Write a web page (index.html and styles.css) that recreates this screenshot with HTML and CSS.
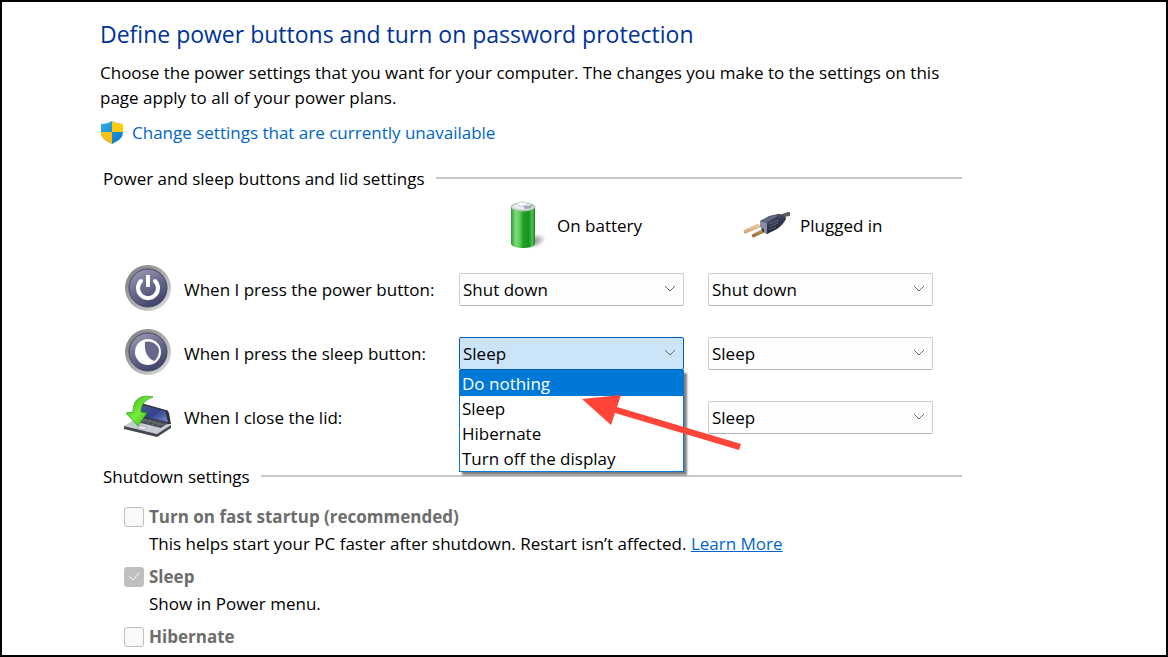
FILE: index.html
```html
<!DOCTYPE html>
<html lang="en">
<head>
	<meta charset="UTF-8">
	<meta name="viewport" content="width=device-width, initial-scale=1">
	<title>System Settings</title>
	<link rel="stylesheet" href="styles.css">
</head>
<body>
	<main class="window">
		<div class="content">
			<h1>Define power buttons and turn on password protection</h1>
			<p class="intro">Choose the power settings that you want for your computer. The changes you make to the settings on this page apply to all of your power plans.</p>
			<a class="admin-link" href="#">
				<svg class="shield" viewBox="0 0 24 24" aria-hidden="true">
					<defs>
						<clipPath id="shield-clip"><path d="M12 0C9 2 5 3 1 3v8c0 6 5 9 11 12 6-3 11-6 11-12V3c-4 0-8-1-11-3z"/></clipPath>
						<linearGradient id="shield-blue" x1="0" y1="0" x2="1" y2="1"><stop offset="0" stop-color="#35ade6"/><stop offset="1" stop-color="#0872c8"/></linearGradient>
						<linearGradient id="shield-gold" x1="1" y1="0" x2="0" y2="1"><stop offset="0" stop-color="#ffd400"/><stop offset="1" stop-color="#f9b616"/></linearGradient>
					</defs>
					<g clip-path="url(#shield-clip)">
						<path fill="url(#shield-blue)" d="M0 0h24v24H0z"/>
						<path fill="url(#shield-gold)" d="M12 0h12v11H12zM0 11h12v13H0z"/>
					</g>
				</svg>
				<span>Change settings that are currently unavailable</span>
			</a>

			<section>
				<h2>Power and sleep buttons and lid settings</h2>
				<div class="settings">
					<div class="source source-battery">
						<svg class="icon" viewBox="0 0 48 48" aria-hidden="true">
							<defs>
								<linearGradient id="cell"><stop offset="0" stop-color="#2f9a35"/><stop offset=".2" stop-color="#7ddd7b"/><stop offset=".38" stop-color="#58c95a"/><stop offset=".5" stop-color="#22a02a"/><stop offset=".75" stop-color="#179420"/><stop offset=".88" stop-color="#4cc352"/><stop offset="1" stop-color="#177d1e"/></linearGradient>
								<radialGradient id="cell-shadow"><stop offset="0" stop-color="#777" stop-opacity=".8"/><stop offset="1" stop-color="#777" stop-opacity="0"/></radialGradient>
							</defs>
							<ellipse cx="36" cy="40" rx="11" ry="7" fill="url(#cell-shadow)" transform="rotate(-20 36 40)"/>
							<path fill="url(#cell)" d="M12 6v37c1 3 7 4 12 4s11-1 12-4V6z"/>
							<ellipse cx="24" cy="6" rx="12" ry="4" fill="#d4e2d6" stroke="#9abf9c"/>
							<ellipse cx="24" cy="5" rx="9" ry="3" fill="#eef0f6"/>
							<path fill="#a5a7bd" d="M24 5l10-1c-1 3-4 4-8 4z"/>
							<ellipse cx="23" cy="3" rx="5" ry="2" fill="#fff" stroke="#c9cad8"/>
						</svg>
						<span>On battery</span>
					</div>
					<div class="source source-plugged">
						<svg class="icon" viewBox="0 0 48 48" aria-hidden="true">
							<defs>
								<linearGradient id="plug" x1="0" y1="0" x2=".5" y2="1"><stop offset="0" stop-color="#5a5e78"/><stop offset=".5" stop-color="#3a3d55"/><stop offset="1" stop-color="#1d1f33"/></linearGradient>
								<linearGradient id="prong" x1=".3" y1="0" x2=".7" y2="1"><stop offset="0" stop-color="#fbe6c4"/><stop offset=".5" stop-color="#d9a468"/><stop offset="1" stop-color="#76502d"/></linearGradient>
							</defs>
							<path fill="none" stroke="#59605e" stroke-width="4" d="M40 16c3-3 5-3 8-3"/>
							<path fill="url(#prong)" stroke="#a98055" stroke-width=".4" d="M16 23L3 29c-2 1-1 4 1 3l14-6zM23 27l-12 6c-2 1-1 4 1 3l13-6z"/>
							<path fill="url(#plug)" d="M18 20l9-5 9-2c4 0 8 2 8 5-2 4-5 7-9 10l-10 5-5-3z"/>
							<path fill="#8a8da6" d="M18 20l7 2v11l-3-1v-4l-4-2z"/>
							<path fill="#777b92" opacity=".5" d="M19 20l9-5 9-1-12 8z"/>
							<path fill="none" stroke="#858aa2" stroke-width=".5" d="M27 23l10-4M27 26l9-4M27 29l7-3M22 20l12-5"/>
						</svg>
						<span>Plugged in</span>
					</div>

					<div class="action">
						<svg class="icon" viewBox="0 0 48 48" aria-hidden="true">
							<defs>
								<linearGradient id="ring" x1="0" y1="0" x2="1" y2="1"><stop offset="0" stop-color="#777"/><stop offset=".5" stop-color="#aaa"/><stop offset="1" stop-color="#e3e3e3"/></linearGradient>
								<linearGradient id="face" x1=".2" y1="0" x2=".7" y2="1"><stop offset="0" stop-color="#9a9bb0"/><stop offset=".5" stop-color="#66678a"/><stop offset="1" stop-color="#40416a"/></linearGradient>
							</defs>
							<circle cx="24" cy="23" r="23" fill="url(#ring)"/>
							<circle cx="24" cy="23" r="19" fill="url(#face)" stroke="#44465e"/>
							<g fill="none" stroke="#fff" stroke-linecap="round" stroke-width="4">
								<path d="M17 16a10 10 0 1 0 14 0"/>
								<path stroke-linecap="butt" d="M24 10v12"/>
							</g>
						</svg>
						<span>When I press the power button:</span>
					</div>
					<div class="choice">
						<select aria-label="When I press the power button, on battery"><option>Shut down</option><option>Sleep</option></select>
					</div>
					<div class="choice">
						<select aria-label="When I press the power button, plugged in"><option>Shut down</option><option>Sleep</option></select>
					</div>

					<div class="action">
						<svg class="icon" viewBox="0 0 48 48" aria-hidden="true">
							<circle cx="24" cy="23" r="23" fill="url(#ring)"/>
							<circle cx="24" cy="23" r="19" fill="url(#face)" stroke="#44465e"/>
							<circle cx="24" cy="23" r="13" fill="#fff"/>
							<path fill="#66678a" d="M21 13c6-2 13 2 14 8 0 5-2 9-5 11-7-3-10-10-9-19z"/>
						</svg>
						<span>When I press the sleep button:</span>
					</div>
					<div class="choice">
						<select class="open" aria-label="When I press the sleep button, on battery"><option>Sleep</option><option>Do nothing</option></select>
						<ul class="menu" role="listbox" aria-label="Sleep button actions">
							<li class="selected" role="option" aria-selected="true">Do nothing</li>
							<li role="option">Sleep</li>
							<li role="option">Hibernate</li>
							<li role="option">Turn off the display</li>
						</ul>
						<svg class="pointer" viewBox="0 0 160 58" aria-hidden="true">
							<path fill="#ff4538" d="M0 6l39-4-4 12 124 37-2 6L33 20l-4 12z"/>
						</svg>
					</div>
					<div class="choice">
						<select aria-label="When I press the sleep button, plugged in"><option>Sleep</option><option>Do nothing</option></select>
					</div>

					<div class="action">
						<svg class="icon" viewBox="0 0 48 48" aria-hidden="true">
							<defs>
								<linearGradient id="screen" x1="0" y1="0" x2="1" y2="1"><stop offset="0" stop-color="#4a5794"/><stop offset=".5" stop-color="#34438a"/><stop offset="1" stop-color="#7489d2"/></linearGradient>
								<linearGradient id="down" x1="0" y1="0" x2="1" y2="1"><stop offset="0" stop-color="#2fb416"/><stop offset=".5" stop-color="#78ea3c"/><stop offset="1" stop-color="#2eb512"/></linearGradient>
							</defs>
							<path fill="#30333e" d="M17 10l25 7c2 0 2 1 3 3l2 11-6 1-27-7z"/>
							<path fill="url(#screen)" d="M18 12l23 6 3 11-27-6z"/>
							<path fill="#c8cbd1" d="M11 26l36 6-14 9L0 33z"/>
							<path fill="#44474f" d="M0 33l33 8 14-9v3L33 44 0 36z"/>
							<path fill="#4b4d57" d="M17 24l27 6-7 5-24-6z"/>
							<path fill="none" stroke="#8b8e98" stroke-width=".5" d="M16 26l24 6M22 26l-4 3M27 27l-4 3M32 29l-4 3M37 30l-4 3"/>
							<path fill="#edeef2" stroke="#888b93" stroke-width=".5" d="M17 33l6 1-3 3-7-2z"/>
							<path fill="url(#down)" stroke="#1c9810" stroke-width=".7" d="M29 4C17 1 9 6 9 19l-7 1 12 13 9-13-6-1c0-7 3-12 12-15z"/>
						</svg>
						<span>When I close the lid:</span>
					</div>
					<div class="choice">
						<select aria-label="When I close the lid, on battery"><option>Sleep</option></select>
					</div>
					<div class="choice">
						<select aria-label="When I close the lid, plugged in"><option>Sleep</option></select>
					</div>
				</div>
			</section>

			<section>
				<h2>Shutdown settings</h2>
				<div class="shutdown">
					<input type="checkbox" id="fast-startup" disabled>
					<label for="fast-startup">Turn on fast startup (recommended)</label>
					<p>This helps start your PC faster after shutdown. Restart isn’t affected. <a href="#">Learn More</a></p>
					<input type="checkbox" id="sleep" checked disabled>
					<label for="sleep">Sleep</label>
					<p>Show in Power menu.</p>
					<input type="checkbox" id="hibernate" disabled>
					<label for="hibernate">Hibernate</label>
				</div>
			</section>
		</div>
	</main>
</body>
</html>
```
FILE: styles.css
```css
* {
	box-sizing: border-box;
}
body {
	margin: 0;
	background: #fff;
	color: #000;
	font: 17px/25px "Open Sans", "Noto Sans", sans-serif;
}
h1, h2, p, ul {
	margin: 0;
	padding: 0;
	font-weight: normal;
}
a {
	color: #0066cc;
}
.window {
	min-height: 100vh;
	border: 2px solid #000;
	padding: 16px 24px 0 98px;
}
.content {
	max-width: 862px;
}
h1 {
	color: #003399;
	font-size: 23px;
	line-height: 32px;
}
.intro {
	margin-top: 10px;
}
.admin-link {
	display: flex;
	align-items: center;
	gap: 8px;
	margin-top: 10px;
	text-decoration: none;
}
.shield {
	width: 24px;
	height: 24px;
}
section {
	margin-left: 3px;
}
h2 {
	display: flex;
	align-items: center;
	gap: 11px;
	font-size: 17px;
}
h2::after {
	content: "";
	flex: 1;
	height: 2px;
	margin-bottom: 2px;
	background: #c8c8c8;
}

/* power and sleep buttons */
.admin-link + section {
	margin-top: 21px;
}
.settings {
	display: grid;
	grid-template-columns: minmax(0, 311px) 225px 225px;
	grid-auto-rows: 64px;
	column-gap: 24px;
	align-items: center;
	margin-top: 2px;
	padding-left: 21px;
}
.source, .action {
	display: flex;
	align-items: center;
}
.source {
	gap: 10px;
}
.action {
	gap: 12px;
}
.source-battery {
	grid-column: 2;
	padding-left: 40px;
}
.source-plugged {
	padding-left: 34px;
}
.icon {
	flex: none;
	width: 48px;
	height: 48px;
}
.choice {
	position: relative;
}
select {
	display: block;
	width: 100%;
	height: 33px;
	padding: 0 3px;
	border: 1px solid #ccc;
	border-bottom-color: #b4b4b4;
	border-radius: 2px;
	appearance: none;
	background: #fdfdfd url("data:image/svg+xml,%3Csvg xmlns='http://www.w3.org/2000/svg' width='12' height='8'%3E%3Cpath fill='none' stroke='%23666' d='M1 1l5 5 5-5'/%3E%3C/svg%3E") no-repeat right 7px center;
	color: #000;
	font: inherit;
}
select.open {
	border-color: #005fb8;
	background-color: #cce4f7;
}
.menu {
	position: absolute;
	z-index: 1;
	top: 100%;
	left: 0;
	right: 0;
	border: 1px solid #0078d7;
	background: #fff;
	box-shadow: 3px 3px 2px rgba(0, 0, 0, .5);
	list-style: none;
}
.menu li {
	padding-left: 2px;
}
.menu .selected {
	background: #0078d7;
	color: #fff;
}
.pointer {
	position: absolute;
	z-index: 2;
	top: 56px;
	left: 123px;
	width: 160px;
	height: 58px;
}

/* shutdown settings */
section + section {
	margin-top: 15px;
}
.shutdown {
	display: grid;
	grid-template-columns: 20px 1fr;
	column-gap: 5px;
	align-items: center;
	padding: 14px 0 0 21px;
	line-height: 27px;
}
.shutdown label {
	color: #6d6d6d;
	font-weight: bold;
}
.shutdown p {
	grid-column: 2;
	margin-bottom: 6px;
}
input[type=checkbox] {
	width: 20px;
	height: 20px;
	margin: 0;
	border: 1px solid #c0c0c0;
	border-radius: 3px;
	appearance: none;
	background: #f9f9f9;
}
input[type=checkbox]:checked {
	background: #bfbfbf url("data:image/svg+xml,%3Csvg xmlns='http://www.w3.org/2000/svg' width='12' height='9'%3E%3Cpath fill='none' stroke='%23fff' d='M1 4l4 4 6-7'/%3E%3C/svg%3E") no-repeat center;
}
```
